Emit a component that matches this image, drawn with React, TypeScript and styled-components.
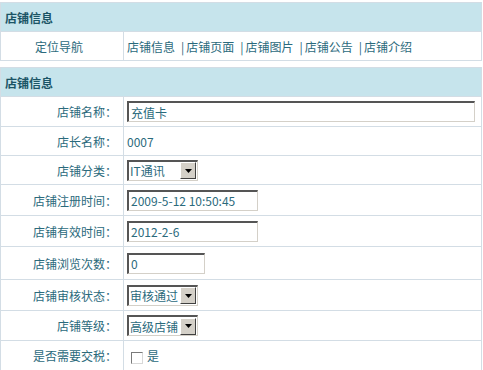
import { Fragment } from "react";
import styled, { createGlobalStyle } from "styled-components";

const GlobalStyle = createGlobalStyle`
  body {
    margin: 0;
    padding-top: 2px;
    background: #ffffff;
    font-family: "Noto Sans CJK SC", "DejaVu Sans", sans-serif;
    font-size: 12px;
    color: #2b6a7c;
  }
`;

const Table = styled.table<{ $gap?: boolean }>`
  width: 482px;
  border-collapse: collapse;
  margin-bottom: ${(p) => (p.$gap ? "6px" : "0")};
  border: 1px solid #d3dde5;
`;

const HeadCell = styled.th`
  height: 28px;
  padding: 0 0 0 4px;
  background: #c6e4ec;
  color: #1b5566;
  font-weight: bold;
  font-size: 12px;
  text-align: left;
  border-bottom: 1px solid #d3dde5;
`;

const Row = styled.tr<{ $h?: number }>`
  height: ${(p) => p.$h ?? 30}px;
  border-bottom: 1px solid #d3dde5;
`;

const Label = styled.td<{ $center?: boolean }>`
  width: 116px;
  padding: 0 6px 0 0;
  text-align: ${(p) => (p.$center ? "center" : "right")};
  border-right: 1px solid #d3dde5;
  white-space: nowrap;
`;

const Value = styled.td`
  padding: 0 0 0 3px;
  white-space: nowrap;
`;

const NavLink = styled.span`
  color: #2b6a7c;
`;

const Sep = styled.span`
  margin: 0 2px 0 6px;
`;

const TextBox = styled.input<{ $w: number }>`
  box-sizing: border-box;
  width: ${(p) => p.$w}px;
  height: 21px;
  padding: 0 2px;
  margin: 0;
  vertical-align: middle;
  font-family: "Noto Sans CJK SC", "DejaVu Sans", sans-serif;
  font-size: 12px;
  color: #2b6a7c;
  background: #fff;
  border-style: solid;
  border-width: 2px 1px 1px 2px;
  border-color: #555555 #d4d0c8 #d4d0c8 #555555;
  outline: none;
`;

const FakeSelect = styled.div`
  display: inline-flex;
  align-items: center;
  box-sizing: border-box;
  height: 21px;
  width: 71px;
  vertical-align: middle;
  border-style: solid;
  border-width: 2px 1px 1px 2px;
  border-color: #555555 #d4d0c8 #d4d0c8 #555555;
  background: #fff;
`;

const SelectText = styled.span`
  flex: 1;
  padding-left: 1px;
  color: #2b6a7c;
  overflow: hidden;
`;

const Arrow = styled.span`
  display: flex;
  align-items: center;
  justify-content: center;
  box-sizing: border-box;
  width: 16px;
  height: 17px;
  margin-right: 1px;
  background: #d4d0c8;
  border-style: solid;
  border-width: 1px;
  border-color: #ffffff #404040 #404040 #ffffff;
`;

const Check = styled.span`
  display: inline-block;
  box-sizing: border-box;
  width: 12px;
  height: 12px;
  margin: 0 4px 0 4px;
  vertical-align: middle;
  background: #fff;
  border-style: solid;
  border-width: 1px;
  border-color: #7a7a7a #d8d8d8 #d8d8d8 #7a7a7a;
`;

const Select = ({ text }: { text: string }) => (
  <FakeSelect>
    <SelectText>{text}</SelectText>
    <Arrow>
      <svg width="7" height="4" viewBox="0 0 7 4">
        <path d="M0 0h7L3.5 4z" fill="#000" />
      </svg>
    </Arrow>
  </FakeSelect>
);

const navItems = ["店铺信息", "店铺页面", "店铺图片", "店铺公告", "店铺介绍"];

export default function App() {
  return (
    <>
      <GlobalStyle />
      <Table $gap>
        <tbody>
          <tr>
            <HeadCell colSpan={2}>店铺信息</HeadCell>
          </tr>
          <Row $h={29}>
            <Label $center>定位导航</Label>
            <Value>
              {navItems.map((n, i) => (
                <Fragment key={n}>
                  {i > 0 && <Sep>|</Sep>}
                  <NavLink>{n}</NavLink>
                </Fragment>
              ))}
            </Value>
          </Row>
        </tbody>
      </Table>
      <Table>
        <tbody>
          <tr>
            <HeadCell colSpan={2}>店铺信息</HeadCell>
          </tr>
          <Row>
            <Label>店铺名称：</Label>
            <Value>
              <TextBox $w={348} defaultValue="充值卡" />
            </Value>
          </Row>
          <Row $h={29}>
            <Label>店长名称：</Label>
            <Value>0007</Value>
          </Row>
          <Row $h={29}>
            <Label>店铺分类：</Label>
            <Value>
              <Select text="IT通讯" />
            </Value>
          </Row>
          <Row $h={31}>
            <Label>店铺注册时间：</Label>
            <Value>
              <TextBox $w={131} defaultValue="2009-5-12 10:50:45" />
            </Value>
          </Row>
          <Row $h={31}>
            <Label>店铺有效时间：</Label>
            <Value>
              <TextBox $w={131} defaultValue="2012-2-6" />
            </Value>
          </Row>
          <Row $h={33}>
            <Label>店铺浏览次数：</Label>
            <Value>
              <TextBox $w={78} defaultValue="0" />
            </Value>
          </Row>
          <Row $h={31}>
            <Label>店铺审核状态：</Label>
            <Value>
              <Select text="审核通过" />
            </Value>
          </Row>
          <Row $h={30}>
            <Label>店铺等级：</Label>
            <Value>
              <Select text="高级店铺" />
            </Value>
          </Row>
          <Row $h={30}>
            <Label>是否需要交税：</Label>
            <Value>
              <Check />
              是
            </Value>
          </Row>
        </tbody>
      </Table>
    </>
  );
}
